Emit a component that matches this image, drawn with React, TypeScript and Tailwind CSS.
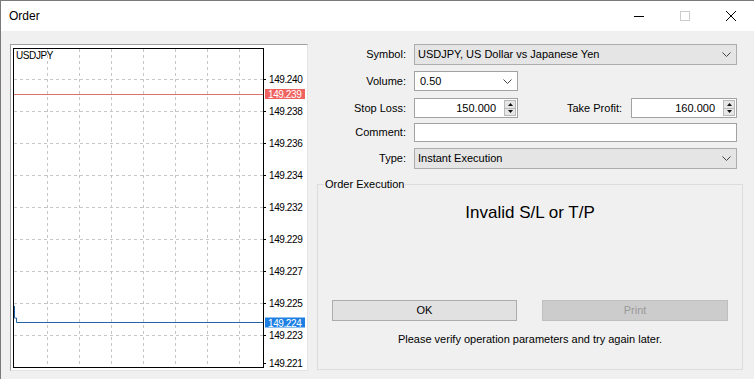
import React from "react";

const FONT = { fontFamily: '"Liberation Sans", Arial, sans-serif' };

const gridX = [36, 68, 100, 132, 164, 196, 228];
const gridY = [34, 66, 98, 130, 162, 194, 226, 258, 290];
const axisLabels: [string, number][] = [
  ["149.240", 34],
  ["149.238", 66],
  ["149.236", 98],
  ["149.234", 130],
  ["149.232", 162],
  ["149.229", 194],
  ["149.227", 226],
  ["149.225", 258],
  ["149.223", 290],
  ["149.221", 318],
];

function Chevron({ className }: { className?: string }) {
  return (
    <svg viewBox="0 0 9 5" width="9" height="5" aria-hidden="true" className={className}>
      <path d="M0.5 0.5 4.5 4.5 8.5 0.5" fill="none" stroke="#444" strokeWidth="1" />
    </svg>
  );
}

function Spinner() {
  return (
    <div className="my-[1px] mr-[1px] flex w-[12px] flex-col self-stretch border border-[#b9b9b9] bg-[#e6e6e6]">
      <div className="flex flex-1 items-center justify-center border-b border-[#b9b9b9]">
        <svg width="5" height="3" viewBox="0 0 5 3" aria-hidden="true">
          <path d="M2.5 0 5 3H0z" fill="#111" />
        </svg>
      </div>
      <div className="flex flex-1 items-center justify-center">
        <svg width="5" height="3" viewBox="0 0 5 3" aria-hidden="true">
          <path d="M0 0h5L2.5 3z" fill="#111" />
        </svg>
      </div>
    </div>
  );
}

function PriceChart() {
  return (
    <svg width="296" height="325" viewBox="0 0 296 325" className="block" style={FONT}>
      {gridX.map((x) => (
        <line key={`v${x}`} x1={x + 0.5} y1={4} x2={x + 0.5} y2={322} stroke="#c6c6c6" strokeDasharray="3 3" />
      ))}
      {gridY.map((y) => (
        <line key={`h${y}`} x1={3} y1={y + 0.5} x2={252} y2={y + 0.5} stroke="#c6c6c6" strokeDasharray="3 3" />
      ))}
      {axisLabels.map(([, y]) => (
        <line key={`t${y}`} x1={253} y1={y + 0.5} x2={255} y2={y + 0.5} stroke="#000" />
      ))}
      <rect x="2.5" y="3.5" width="250" height="319" fill="none" stroke="#000" />

      <text x="5" y="14" fontSize="10" letterSpacing="-0.4" fill="#000">
        USDJPY
      </text>

      {/* ask line */}
      <line x1={3} y1={49.5} x2={252} y2={49.5} stroke="#d9706c" />
      {/* bid line */}
      <polyline points="3.5,261 3.5,273 5.5,273 5.5,277.5 252,277.5" fill="none" stroke="#2565a6" />

      {axisLabels.map(([label, y]) => (
        <text key={label} x="258" y={y + 0.5} dominantBaseline="central" fontSize="10" letterSpacing="-0.4" fill="#000">
          {label}
        </text>
      ))}

      <rect x="254" y="44" width="40" height="10" fill="#f0625f" />
      <text x="257" y="49.5" dominantBaseline="central" fontSize="10" letterSpacing="-0.4" fill="#fff">
        149.239
      </text>
      <rect x="254" y="272.5" width="40" height="10" fill="#1d7fe3" />
      <text x="257" y="278" dominantBaseline="central" fontSize="10" letterSpacing="-0.4" fill="#fff">
        149.224
      </text>
    </svg>
  );
}

function Label({ children, width = "w-[89px]" }: { children: React.ReactNode; width?: string }) {
  return <div className={`${width} shrink-0 text-right`}>{children}</div>;
}

export default function App() {
  return (
    <div
      className="h-[379px] w-[754px] overflow-hidden border-l border-t border-[#7a7a7a] bg-[#f0f0f0] text-[11px] leading-[13px] text-black"
      style={FONT}
    >
      {/* title bar */}
      <div className="flex h-[30px] items-center bg-white">
        <span className="flex-1 pl-[8px] text-[12px]">Order</span>
        <div className="flex h-full">
          <div className="flex w-[46px] items-center justify-center">
            <svg width="10" height="10" viewBox="0 0 10 10" aria-hidden="true">
              <path d="M0 5.5h10" stroke="#000" />
            </svg>
          </div>
          <div className="flex w-[46px] items-center justify-center">
            <svg width="10" height="10" viewBox="0 0 10 10" aria-hidden="true">
              <rect x="0.5" y="0.5" width="9" height="9" fill="none" stroke="#cccccc" />
            </svg>
          </div>
          <div className="flex w-[46px] items-center justify-center">
            <svg width="10" height="10" viewBox="0 0 10 10" aria-hidden="true">
              <path d="M0 0 10 10M10 0 0 10" stroke="#000" strokeWidth="1" />
            </svg>
          </div>
        </div>
      </div>

      <div className="flex pt-[13px]">
        {/* chart */}
        <div className="ml-[9px] h-[327px] w-[298px] shrink-0 border border-b-[#e3e3e3] border-l-[#a0a0a0] border-r-[#e3e3e3] border-t-[#a0a0a0] bg-white">
          <PriceChart />
        </div>

        {/* order form */}
        <div className="ml-[9px] flex w-[426px] flex-col">
          <div className="flex h-[21px] items-center">
            <Label>Symbol:</Label>
            <div className="ml-[8px] flex h-full w-[323px] items-center justify-between border border-[#adadad] bg-[#e5e5e5] pl-[3px] pr-[5px]">
              <span>USDJPY, US Dollar vs Japanese Yen</span>
              <Chevron />
            </div>
          </div>

          <div className="mt-[6px] flex h-[20px] items-center">
            <Label>Volume:</Label>
            <div className="ml-[8px] flex h-full w-[104px] items-center justify-between border border-[#a2a2a2] bg-white pl-[5px] pr-[5px]">
              <span>0.50</span>
              <Chevron />
            </div>
          </div>

          <div className="mt-[7px] flex h-[20px] items-center">
            <Label>Stop Loss:</Label>
            <div className="ml-[8px] flex h-full w-[104px] items-center border border-[#a2a2a2] bg-white">
              <span className="flex-1 pr-[8px] text-right">150.000</span>
              <Spinner />
            </div>
            <Label width="w-[104px]">Take Profit:</Label>
            <div className="ml-[9px] flex h-full w-[106px] items-center border border-[#a2a2a2] bg-white">
              <span className="flex-1 pr-[8px] text-right">160.000</span>
              <Spinner />
            </div>
          </div>

          <div className="mt-[5px] flex h-[19px] items-center">
            <Label>Comment:</Label>
            <div className="ml-[8px] h-full w-[323px] border border-[#a2a2a2] bg-white" />
          </div>

          <div className="mt-[6px] flex h-[21px] items-center">
            <Label>Type:</Label>
            <div className="ml-[8px] flex h-full w-[323px] items-center justify-between border border-[#adadad] bg-[#e5e5e5] pl-[3px] pr-[5px]">
              <span>Instant Execution</span>
              <Chevron />
            </div>
          </div>

          <fieldset className="mt-[9px] w-[426px] border border-[#dcdcdc] pb-[23px]">
            <legend className="ml-[6px] px-[1px] text-[11px] leading-[13px]">Order Execution</legend>
            <div className="mt-[12px] text-center text-[17px] leading-[20px]">Invalid S/L or T/P</div>
            <div className="ml-[14px] mt-[77px] flex gap-[25px]">
              <div className="flex h-[21px] w-[185px] items-center justify-center border border-[#adadad] bg-[#e1e1e1]">
                OK
              </div>
              <div className="flex h-[21px] w-[186px] items-center justify-center border border-[#bfbfbf] bg-[#cccccc] text-[#9a9a9a]">
                Print
              </div>
            </div>
            <div className="mt-[12px] text-center">Please verify operation parameters and try again later.</div>
          </fieldset>
        </div>
      </div>
    </div>
  );
}
